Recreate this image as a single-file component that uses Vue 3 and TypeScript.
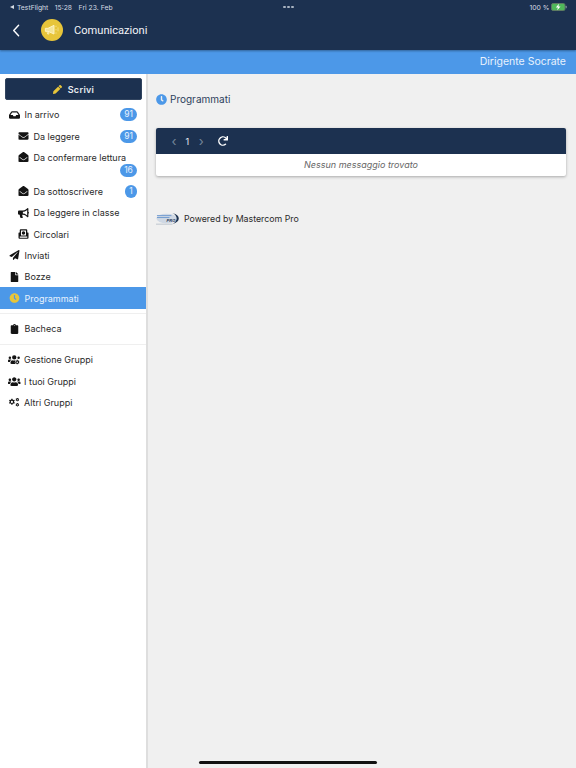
<template>
  <div class="page">
    <header class="topbar">
      <div class="status">
        <div class="status-side">
          <span class="tri"></span>
          <span>TestFlight</span>
          <span class="st-time">15:28</span>
          <span class="st-date">Fri 23. Feb</span>
        </div>
        <div class="dots"><i></i><i></i><i></i></div>
        <div class="status-side right">
          <span>100 %</span>
          <svg class="battery" viewBox="0 0 16 8">
            <rect x="0.5" y="0.5" width="13.5" height="7" rx="1.6" fill="#4fb85a" stroke="#5d7a62" />
            <rect x="14.6" y="2.7" width="1.2" height="2.6" rx="0.6" fill="#7d8a96" />
            <path d="M8 .8 4.8 4.4h2.1L6.2 7.2l3.3-3.8H7.4z" fill="#fff" />
          </svg>
        </div>
      </div>
      <div class="titlebar">
        <svg class="back" viewBox="0 0 12 20">
          <path d="M10 2 2.5 10l7.5 8" fill="none" stroke="#fff" stroke-width="2.2" stroke-linecap="round" stroke-linejoin="round" />
        </svg>
        <div class="logo">
          <svg viewBox="0 0 24 20">
            <path d="M2 7.5h4L15 3v13L6 12H2z" fill="#f3e59a" stroke="#fff4c4" stroke-width="1.4" stroke-linejoin="round" />
            <path d="M4.5 12l1 4h2l-1-3.6" fill="none" stroke="#fff4c4" stroke-width="1.2" />
            <path d="M18 3.5v2M18 8.5v2M18 13.5v2M21 6v6" stroke="#fff4c4" stroke-width="1" opacity=".8" />
          </svg>
        </div>
        <span class="title">Comunicazioni</span>
      </div>
    </header>
    <div class="subbar">Dirigente Socrate</div>

    <div class="main">
      <aside class="sidebar">
        <button class="write">
          <svg viewBox="0 0 512 512"><path :d="icons.pencil" /></svg>
          Scrivi
        </button>

        <nav class="menu">
          <template v-for="item in menu" :key="item.label">
            <div v-if="item.sep" class="sep"></div>
            <div class="row" :class="{ sub: item.sub, active: item.active, tall: item.wrap }">
              <div class="row-line">
                <svg class="ico" :class="{ wide: item.wide }" :viewBox="item.box || '0 0 512 512'"><path :d="item.icon" /></svg>
                <span class="label">{{ item.label }}</span>
                <span v-if="item.badge && !item.wrap" class="badge" :class="{ round: item.badge.length === 1 }">{{ item.badge }}</span>
              </div>
              <span v-if="item.wrap" class="badge wrapped">{{ item.badge }}</span>
            </div>
          </template>
        </nav>
      </aside>

      <section class="content">
        <h2 class="heading">
          <span class="clock">
            <svg viewBox="0 0 512 512"><path :d="icons.clock" /></svg>
          </span>
          Programmati
        </h2>

        <div class="card">
          <div class="card-bar">
            <span class="chev">‹</span>
            <span class="num">1</span>
            <span class="chev">›</span>
            <svg class="reload" viewBox="0 0 512 512"><path :d="icons.redo" /></svg>
          </div>
          <div class="empty">Nessun messaggio trovato</div>
        </div>

        <div class="powered">
          <svg class="mc-logo" viewBox="0 0 26 13">
            <ellipse cx="11" cy="6.5" rx="10.5" ry="5" fill="#cfd8e4" />
            <path d="M1 3.5h15M1 5.5h13" stroke="#6f9ad0" stroke-width="1" />
            <path d="M17 0.8C26 3 26 10 17 12.4 23 9.5 23 3.5 17 0.8z" fill="#1c3150" />
            <path d="M0 12.4h17" stroke="#9aa6b6" stroke-width="0.6" />
            <text x="11" y="10" font-size="4.2" font-style="italic" font-weight="700" fill="#1c3150" font-family="Liberation Sans, sans-serif">PRO</text>
          </svg>
          <span>Powered by Mastercom Pro</span>
        </div>
      </section>
    </div>

    <div class="home-bar"></div>
  </div>
</template>

<script setup lang="ts">
interface MenuItem {
  label: string
  icon: string
  box?: string
  badge?: string
  sub?: boolean
  active?: boolean
  wrap?: boolean
  sep?: boolean
  wide?: boolean
}

const icons = {
  pencil:
    'M497.9 142.1l-46.1 46.1c-4.7 4.7-12.3 4.7-17 0l-111-111c-4.7-4.7-4.7-12.3 0-17l46.1-46.1c18.7-18.7 49.1-18.7 67.9 0l60.1 60.1c18.8 18.7 18.8 49.1 0 67.9zM284.2 99.8L21.6 362.4.4 483.9c-2.9 16.4 11.4 30.6 27.8 27.8l121.5-21.3 262.6-262.6c4.7-4.7 4.7-12.3 0-17l-111-111c-4.8-4.7-12.4-4.7-17.1 0z',
  clock:
    'M256,8C119,8,8,119,8,256S119,504,256,504,504,393,504,256,393,8,256,8Zm92.49,313h0l-20,25a16,16,0,0,1-22.49,2.5h0l-67-49.72a40,40,0,0,1-15-31.23V112a16,16,0,0,1,16-16h32a16,16,0,0,1,16,16V256l58,42.5A16,16,0,0,1,348.49,321Z',
  redo:
    'M500.33 0h-47.41a12 12 0 0 0-12 12.57l4 82.76A247.42 247.42 0 0 0 256 8C119.34 8 7.9 119.53 8 256.19 8.1 393.07 119.1 504 256 504a247.1 247.1 0 0 0 166.18-63.91 12 12 0 0 0 .48-17.43l-34-34a12 12 0 0 0-16.38-.55A176 176 0 1 1 402.1 157.8l-101.53-4.87a12 12 0 0 0-12.57 12v47.41a12 12 0 0 0 12 12h200.33a12 12 0 0 0 12-12V12a12 12 0 0 0-12-12z',
  inbox:
    'M567.938 243.908L462.25 85.374A48.003 48.003 0 0 0 422.311 64H153.689a48 48 0 0 0-39.938 21.374L8.062 243.908A47.994 47.994 0 0 0 0 270.533V400c0 26.51 21.49 48 48 48h480c26.51 0 48-21.49 48-48V270.533a47.994 47.994 0 0 0-8.062-26.625zM162.252 128h251.497l85.333 128H376l-32 64H232l-32-64H76.918l85.334-128z',
  envelope:
    'M502.3 190.8c3.9-3.1 9.7-.2 9.7 4.7V400c0 26.5-21.5 48-48 48H48c-26.5 0-48-21.5-48-48V195.6c0-5 5.7-7.8 9.7-4.7 22.4 17.4 52.1 39.5 154.1 113.6 21.1 15.4 56.7 47.8 92.2 47.6 35.7.3 72-32.8 92.3-47.6 102-74.1 131.6-96.3 154-113.7zM256 320c23.2.4 56.6-29.2 73.4-41.4 132.7-96.3 142.8-104.7 173.4-128.7 5.8-4.5 9.2-11.5 9.2-18.9v-19c0-26.5-21.5-48-48-48H48C21.5 64 0 85.5 0 112v19c0 7.4 3.4 14.3 9.2 18.9 30.6 23.9 40.7 32.4 173.4 128.7 16.8 12.2 50.2 41.8 73.4 41.4z',
  envelopeOpen:
    'M512 464c0 26.51-21.49 48-48 48H48c-26.51 0-48-21.49-48-48V200.724a48 48 0 0 1 18.387-37.776c24.913-19.529 45.501-35.365 164.2-121.511C199.412 29.17 232.797-.347 256 .003c23.198-.354 56.596 29.172 73.413 41.433 118.687 86.137 139.303 101.995 164.2 121.512A48 48 0 0 1 512 200.724V464zm-65.666-196.605c-2.563-3.728-7.7-4.595-11.339-1.907-22.845 16.873-55.462 40.705-105.582 77.079-16.825 12.266-50.21 41.781-73.413 41.43-23.211.344-56.559-29.143-73.413-41.43-50.114-36.37-82.734-60.204-105.582-77.079-3.639-2.688-8.776-1.821-11.339 1.907l-9.072 13.196a7.998 7.998 0 0 0 1.839 10.967c22.887 16.899 55.454 40.69 105.303 76.868 20.274 14.781 56.524 47.813 92.264 47.573 35.724.242 71.961-32.771 92.263-47.573 49.85-36.179 82.418-59.97 105.303-76.868a7.998 7.998 0 0 0 1.84-10.967l-9.072-13.196z',
  bullhorn:
    'M576 240c0-23.63-12.95-44.04-32-55.12V32.01C544 23.26 537.02 0 512 0c-7.12 0-14.19 2.38-19.98 7.02l-85.03 68.03C364.28 109.19 310.66 128 256 128H64c-35.35 0-64 28.65-64 64v96c0 35.35 28.65 64 64 64h33.7c-1.39 10.48-2.18 21.14-2.18 32 0 39.77 9.26 77.35 25.56 110.94 5.19 10.69 16.52 17.06 28.4 17.06h74.28c26.05 0 41.69-29.84 25.9-50.56-16.4-21.52-26.15-48.36-26.15-77.44 0-11.11 1.62-21.79 4.41-32H256c54.66 0 108.28 18.81 150.98 52.95l85.03 68.03a32.023 32.023 0 0 0 19.98 7.02c24.92 0 32-22.78 32-32V295.13C563.05 284.04 576 263.63 576 240zm-96 141.42l-33.05-26.44C392.95 311.78 325.12 288 256 288v-96c69.12 0 136.95-23.78 190.95-66.98L480 98.58v282.84z',
  circular:
    'M112 16h288a48 48 0 0 1 48 48v112h32a32 32 0 0 1 32 32v240a48 48 0 0 1-48 48H48a48 48 0 0 1-48-48V208a32 32 0 0 1 32-32h32V64a48 48 0 0 1 48-48zm16 64v256h256V80zm128 40a88 88 0 1 1 0 176 88 88 0 0 1 0-176zM64 384v64h384v-64z',
  plane:
    'M476 3.2L12.5 270.6c-18.1 10.4-15.8 35.6 2.2 43.2L121 358.4l287.3-253.2c5.5-4.9 13.3 2.6 8.6 8.3L176 407v80.5c0 23.6 28.5 32.9 42.5 15.8L282 426l124.6 52.2c14.2 6 30.4-2.9 33-18.2l72-432C515 7.8 493.3-6.8 476 3.2z',
  file:
    'M224 136V0H24C10.7 0 0 10.7 0 24v464c0 13.3 10.7 24 24 24h336c13.3 0 24-10.7 24-24V160H248c-13.2 0-24-10.8-24-24zm160-14.1v6.1H256V0h6.1c6.4 0 12.5 2.5 17 7l97.9 98c4.5 4.5 7 10.6 7 16.9z',
  clipboard:
    'M336 64h-80c0-35.3-28.7-64-64-64s-64 28.7-64 64H48C21.5 64 0 85.5 0 112v352c0 26.5 21.5 48 48 48h288c26.5 0 48-21.5 48-48V112c0-26.5-21.5-48-48-48zM192 40c13.3 0 24 10.7 24 24s-10.7 24-24 24-24-10.7-24-24 10.7-24 24-24z',
  users:
    'M96 224c35.3 0 64-28.7 64-64s-28.7-64-64-64-64 28.7-64 64 28.7 64 64 64zm448 0c35.3 0 64-28.7 64-64s-28.7-64-64-64-64 28.7-64 64 28.7 64 64 64zm32 32h-64c-17.6 0-33.5 7.1-45.1 18.6 40.3 22.1 68.9 62 75.1 109.4h66c17.7 0 32-14.3 32-32v-32c0-35.3-28.7-64-64-64zm-256 0c61.9 0 112-50.1 112-112S381.9 32 320 32 208 82.1 208 144s50.1 112 112 112zm76.8 32h-8.3c-20.8 10-43.9 16-68.5 16s-47.6-6-68.5-16h-8.3C179.6 288 128 339.6 128 403.2V432c0 26.5 21.5 48 48 48h288c26.5 0 48-21.5 48-48v-28.8c0-63.6-51.6-115.2-115.2-115.2zm-223.7-13.4C161.5 263.1 145.6 256 128 256H64c-35.3 0-64 28.7-64 64v32c0 17.7 14.3 32 32 32h65.9c6.3-47.4 34.9-87.3 75.2-109.4z',
  usersCog:
    'M96 224a64 64 0 1 0 0-128 64 64 0 0 0 0 128zM320 32a112 112 0 0 0 0 224 112 112 0 0 0 0-224zM544 96a64 64 0 1 0 0 128 64 64 0 0 0 0-128zM64 256C29 256 0 285 0 320v32c0 18 14 32 32 32h66c6-47 35-87 75-109-12-12-27-19-45-19zm160 32C170 288 128 340 128 403v29c0 26 22 48 48 48h190c-6-20-6-40-2-60l-24-14 32-56 24 14c6-6 14-10 22-14v-28c-12-20-28-34-50-34h-8c-21 10-44 16-68 16s-48-6-68-16zM496 272h-48l-6 34-26 15-32-12-24 42 26 22v30l-26 22 24 42 32-12 26 15 6 34h48l6-34 26-15 32 12 24-42-26-22v-30l26-22-24-42-32 12-26-15zm-24 80a40 40 0 1 1 0 80 40 40 0 0 1 0-80z',
  cogs:
    'M230 60h-60l-8 46-36 21-44-16-30 52 36 30v42l-36 30 30 52 44-16 36 21 8 46h60l8-46 36-21 44 16 30-52-36-30v-42l36-30-30-52-44 16-36-21zm-30 110a56 56 0 1 1 0 112 56 56 0 0 1 0-112zM500 20h-40l-6 26-20 10-24-10-20 34 20 18v20l-20 18 20 34 24-10 20 10 6 26h40l6-26 20-10 24 10 20-34-20-18v-20l20-18-20-34-24 10-20-10zm-20 66a30 30 0 1 1 0 60 30 30 0 0 1 0-60zM500 280h-40l-6 26-20 10-24-10-20 34 20 18v20l-20 18 20 34 24-10 20 10 6 26h40l6-26 20-10 24 10 20-34-20-18v-20l20-18-20-34-24 10-20-10zm-20 66a30 30 0 1 1 0 60 30 30 0 0 1 0-60z'
}

const menu: MenuItem[] = [
  { label: 'In arrivo', icon: icons.inbox, box: '0 0 576 512', badge: '91' },
  { label: 'Da leggere', icon: icons.envelope, badge: '91', sub: true },
  { label: 'Da confermare lettura', icon: icons.envelopeOpen, badge: '16', sub: true, wrap: true },
  { label: 'Da sottoscrivere', icon: icons.envelopeOpen, badge: '1', sub: true },
  { label: 'Da leggere in classe', icon: icons.bullhorn, box: '0 0 576 512', sub: true },
  { label: 'Circolari', icon: icons.circular, sub: true },
  { label: 'Inviati', icon: icons.plane },
  { label: 'Bozze', icon: icons.file, box: '0 0 384 512' },
  { label: 'Programmati', icon: icons.clock, active: true },
  { label: 'Bacheca', icon: icons.clipboard, box: '0 0 384 512', sep: true },
  { label: 'Gestione Gruppi', icon: icons.usersCog, box: '0 0 640 512', sep: true, wide: true },
  { label: 'I tuoi Gruppi', icon: icons.users, box: '0 0 640 512', wide: true },
  { label: 'Altri Gruppi', icon: icons.cogs, box: '0 0 640 512', wide: true }
]
</script>

<style scoped>
.page {
  width: 576px;
  height: 768px;
  display: flex;
  flex-direction: column;
  position: relative;
  overflow: hidden;
  background: #f0f0f0;
  font-family: "Inter", "Open Sans", sans-serif;
  color: #222;
}

.topbar {
  height: 50px;
  background: #1c3150;
  color: #fff;
  box-shadow: 0 1px 2px rgba(0, 0, 0, 0.35);
  position: relative;
  z-index: 1;
}

.status {
  height: 14px;
  display: flex;
  justify-content: space-between;
  align-items: center;
  padding: 0 9px 0 10px;
  font-size: 6.8px;
  color: #d5dbe3;
}

.status-side {
  display: flex;
  align-items: center;
  width: 140px;
}

.status-side.right {
  justify-content: flex-end;
  gap: 1.5px;
}

.st-time,
.st-date {
  margin-left: 6.5px;
}

.tri {
  width: 0;
  height: 0;
  border-top: 2.5px solid transparent;
  border-bottom: 2.5px solid transparent;
  border-right: 4px solid #d5dbe3;
  margin-right: 3px;
}

.dots {
  display: flex;
  gap: 1.5px;
}

.dots i {
  width: 2.5px;
  height: 2.5px;
  border-radius: 50%;
  background: #aab4c2;
}

.battery {
  width: 16px;
  height: 8px;
}

.titlebar {
  height: 32px;
  display: flex;
  align-items: center;
  padding-left: 12px;
}

.back {
  width: 8px;
  height: 13px;
}

.logo {
  width: 22px;
  height: 22px;
  margin-left: 21px;
  border-radius: 50%;
  background: #e7c53a;
  display: flex;
  align-items: center;
  justify-content: center;
}

.logo svg {
  width: 16px;
  height: 14px;
}

.title {
  margin-left: 11px;
  font-family: "Roboto", sans-serif;
  font-size: 11.1px;
  color: #f2f4f7;
}

.subbar {
  height: 24px;
  background: #4c98e8;
  color: #e8f2fd;
  font-size: 10.5px;
  line-height: 24px;
  text-align: right;
  padding-right: 10px;
}

.main {
  flex: 1;
  display: flex;
  min-height: 0;
}

.sidebar {
  width: 146px;
  flex-shrink: 0;
  background: #fff;
  border-right: 2px solid #dedede;
  padding-top: 4px;
}

.write {
  display: flex;
  align-items: center;
  justify-content: center;
  gap: 6px;
  width: 137px;
  height: 22px;
  margin: 0 0 0 5px;
  padding: 0;
  border: 1px solid #31445f;
  border-radius: 2px;
  background: #1c3150;
  color: #e8ecf1;
  font-family: inherit;
  font-size: 9px;
  font-weight: 600;
  letter-spacing: 0.3px;
}

.write svg {
  width: 9px;
  height: 9px;
  fill: #e7c53a;
}

.menu {
  margin-top: 4px;
}

.row {
  font-size: 9px;
  color: #2a2a2a;
}

.row-line {
  height: 21.35px;
  display: flex;
  align-items: center;
  padding: 0 9px;
}

.row.sub .row-line {
  padding-left: 18px;
}

.row.tall {
  height: 34px;
}

.ico {
  width: 11px;
  height: 10px;
  flex-shrink: 0;
  fill: #141414;
  fill-rule: evenodd;
  margin-right: 4.5px;
}

.ico.wide {
  width: 12.5px;
  height: 11px;
  margin-left: -1px;
  margin-right: 3.5px;
}

.label {
  flex: 1;
  white-space: nowrap;
}

.badge {
  min-width: 17px;
  height: 13px;
  padding: 0 3px;
  box-sizing: border-box;
  border-radius: 6.5px;
  background: #4c98e8;
  color: #e8f2fd;
  font-size: 8.5px;
  line-height: 13px;
  text-align: center;
}

.badge.round {
  min-width: 12px;
  padding: 0;
}

.badge.wrapped {
  display: block;
  width: 17px;
  margin: -4px 9px 0 auto;
}

.row.active {
  background: #4c98e8;
  color: #e8f2fd;
}

.row.active .ico {
  fill: #e7c53a;
}

.sep {
  height: 1px;
  background: #efefef;
  margin: 4px 0 4.5px;
}

.content {
  flex: 1;
  padding: 16px 10px 0 8px;
  min-width: 0;
}

.heading {
  display: flex;
  align-items: center;
  gap: 3px;
  margin: 0;
  height: 18px;
  font-size: 10px;
  font-weight: 400;
  color: #2c3e5c;
}

.clock {
  width: 11px;
  height: 11px;
  display: flex;
}

.clock svg {
  width: 100%;
  height: 100%;
  fill: #4c98e8;
}

.card {
  margin-top: 20px;
  background: #fff;
  border-radius: 2px;
  box-shadow: 0 1px 3px rgba(0, 0, 0, 0.3);
}

.card-bar {
  height: 26px;
  display: flex;
  align-items: center;
  padding-left: 15px;
  background: #1c3150;
  border-radius: 2px 2px 0 0;
  color: #e8ecf1;
  font-size: 9px;
}

.chev {
  width: 6px;
  font-size: 13px;
  line-height: 13px;
  color: #76859a;
  text-align: center;
}

.num {
  margin: 0 9px 0 8.5px;
}

.reload {
  width: 10px;
  height: 10px;
  margin-left: 14px;
  fill: #fff;
}

.empty {
  height: 22px;
  line-height: 22px;
  text-align: center;
  font-size: 9px;
  font-style: italic;
  color: #666;
}

.powered {
  display: flex;
  align-items: center;
  gap: 3px;
  margin-top: 36px;
  font-size: 8.8px;
  color: #2a2a2a;
}

.mc-logo {
  width: 25px;
  height: 13px;
}

.home-bar {
  position: absolute;
  left: 199px;
  bottom: 4px;
  width: 178px;
  height: 3px;
  border-radius: 2px;
  background: #111;
}
</style>
